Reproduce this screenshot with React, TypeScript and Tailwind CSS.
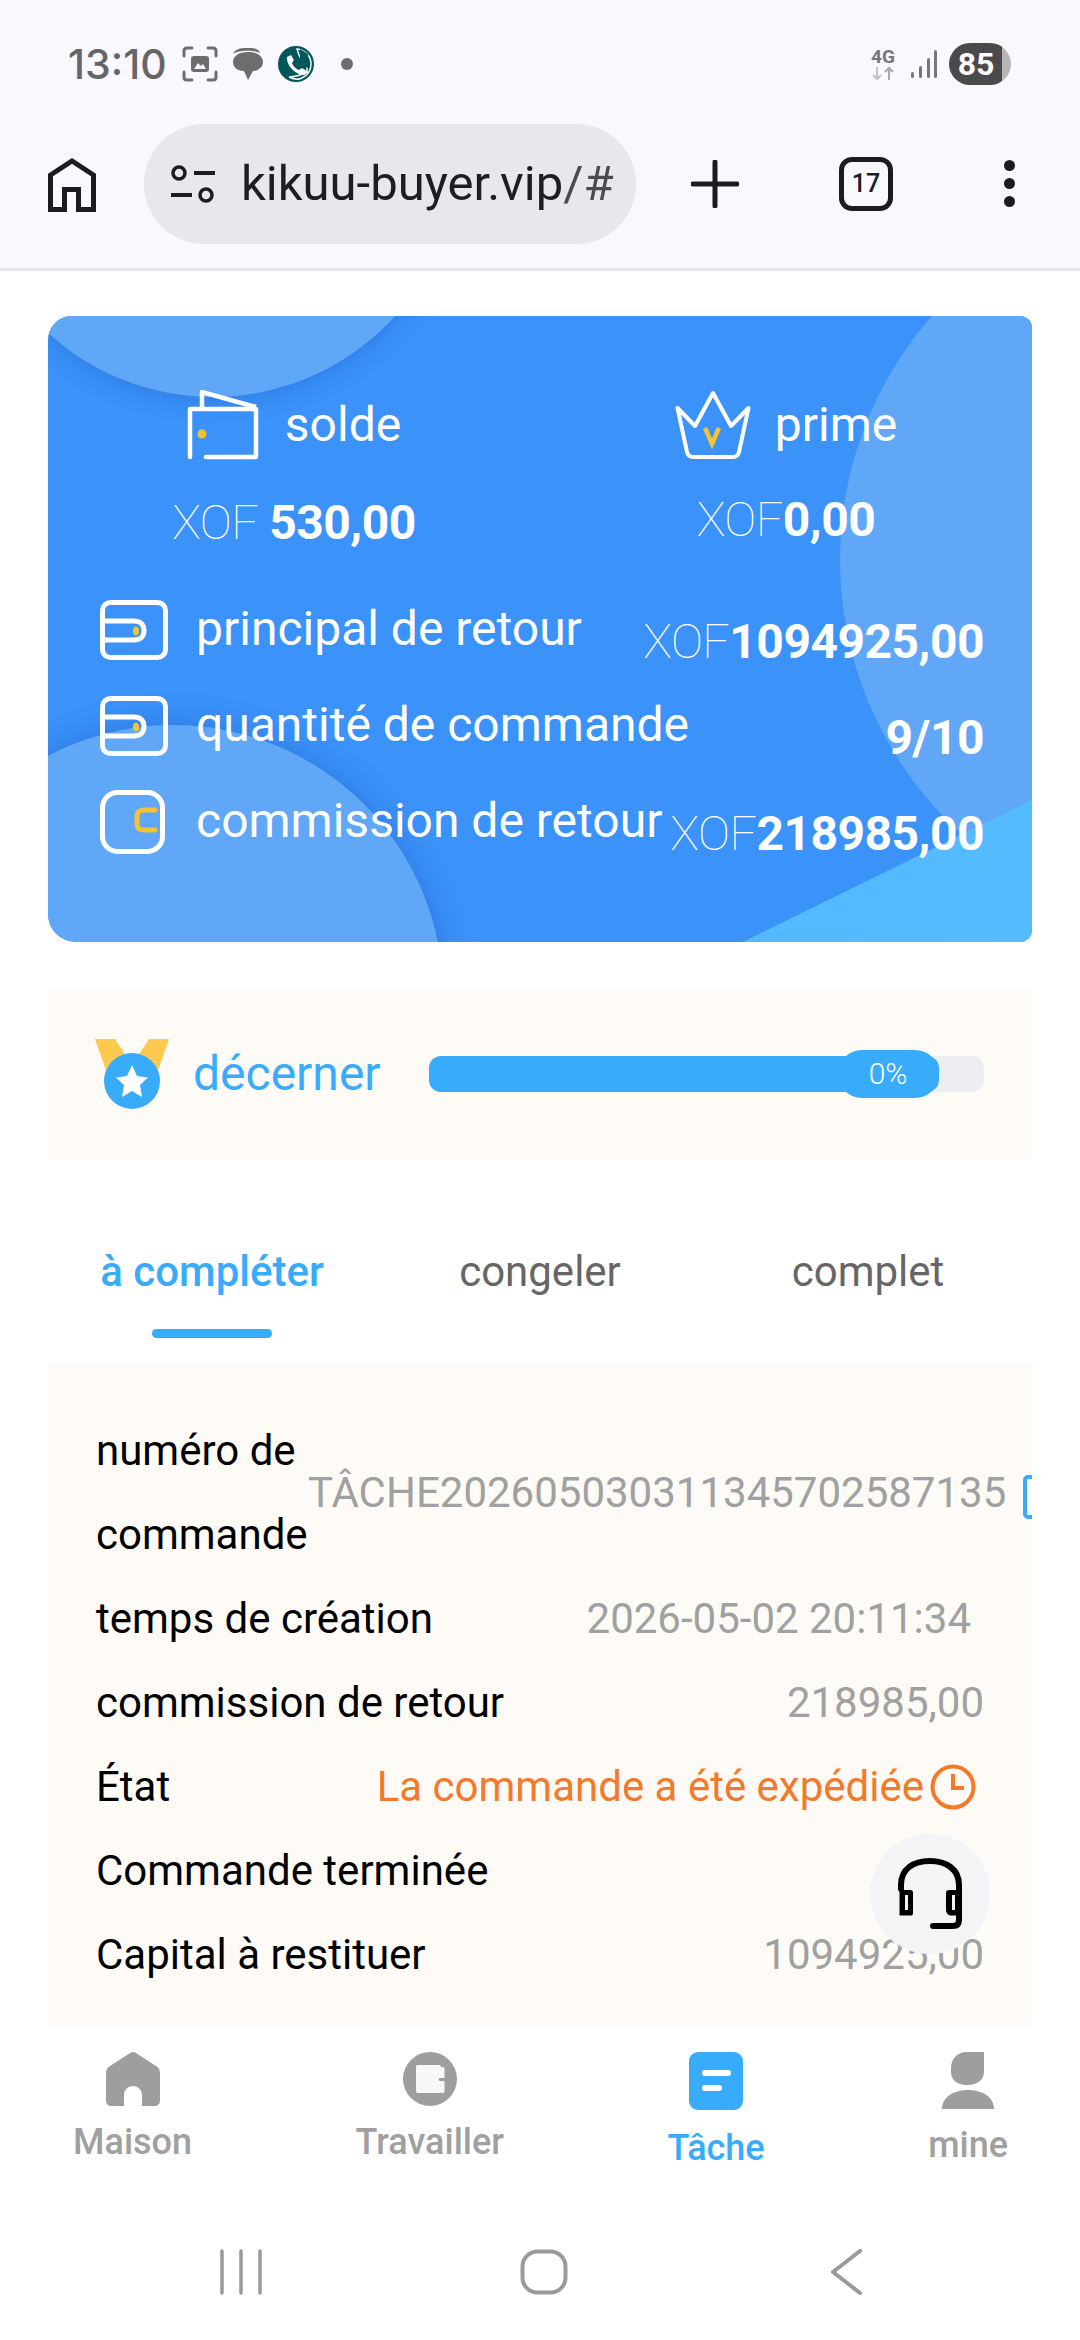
import React from "react";

const Y = "#f5c332";

function RowIcon({ kind }: { kind: "slot" | "c" }) {
  if (kind === "slot")
    return (
      <svg width="68" height="60" viewBox="0 0 68 60" fill="none" className="flex-none">
        <rect x="2.5" y="2.5" width="63" height="55" rx="8" stroke="#fff" strokeWidth="5" />
        <path d="M4 21H34C41 21 44 25 44 30.500C44 36 41 40 34 40H4" stroke="#fff" strokeWidth="5" />
        <ellipse cx="36" cy="31" rx="3" ry="4.500" fill={Y} />
      </svg>
    );
  return (
    <svg width="68" height="64" viewBox="0 0 68 64" fill="none" className="flex-none">
      <rect x="2.500" y="2.500" width="60" height="59" rx="15" stroke="#fff" strokeWidth="5" />
      <path d="M55 20H44C39 20 37 23 37 26V34C37 38 39 40 44 40H55" stroke={Y} strokeWidth="5" strokeLinecap="round" />
    </svg>
  );
}

function Money({ cur, val, className }: { cur: string; val: string; className?: string }) {
  return (
    <div className={"text-white whitespace-nowrap text-[48px] leading-[56px] font-bold tracking-[-0.5px] " + (className || "")}>
      <span className="font-thin">{cur}</span>
      {val}
    </div>
  );
}

function Row({ icon, label, right }: { icon: "slot" | "c"; label: string; right: React.ReactNode }) {
  return (
    <div className="flex items-center justify-between h-[96px] whitespace-nowrap">
      <div className="flex items-center gap-[28px]">
        <RowIcon kind={icon} />
        <span className="text-white text-[48px] leading-[56px] -mt-[2px]">{label}</span>
      </div>
      <div className="mt-[24px]">{right}</div>
    </div>
  );
}

function Detail({ label, children }: { label: string; children: React.ReactNode }) {
  return (
    <div className="flex justify-between items-center h-[84px] whitespace-nowrap">
      <span className="text-black">{label}</span>
      {children}
    </div>
  );
}

export default function App() {
  return (
    <div className="w-[1080px] h-[2340px] bg-white flex flex-col overflow-hidden relative font-['Roboto',sans-serif]">
      {/* browser chrome */}
      <div className="bg-[#f8f8fe] border-b-[3px] border-[#e4e4ea] h-[271px] flex-none">
        <div className="h-[124px] pt-[43px] pl-[68px] pr-[69px] flex justify-between items-start">
          <div className="flex items-center h-[42px]">
            <span className="text-[41px] leading-[42px] text-[#666669] font-medium font-['Inter',sans-serif] w-[114px] whitespace-nowrap">13:10</span>
            <svg width="36" height="36" viewBox="0 0 36 36" fill="none" className="flex-none">
              <path d="M2 10V5C2 3 3 2 5 2H10M26 2H31C33 2 34 3 34 5V10M34 26V31C34 33 33 34 31 34H26M10 34H5C3 34 2 33 2 31V26" stroke="#6d6d70" strokeWidth="3" strokeLinecap="round" />
              <rect x="9" y="10" width="18" height="16" rx="3" fill="#6d6d70" />
              <path d="M12 23L16 17L19 20L21 18L24 23Z" fill="#f8f8fe" />
            </svg>
            <svg width="32" height="34" viewBox="0 0 32 34" className="ml-[14px] flex-none">
              <path d="M1 7C3 2 8 1 14 1H18C24 1 27 3 28 6C23 3 6 3 1 7Z" fill="#6d6d70" />
              <path d="M16 5C25 5 31 9 31 15C31 21 25 24 21 24L16 33L12 24C5 24 1 20 1 15C1 9 7 5 16 5Z" fill="#6d6d70" />
            </svg>
            <svg width="36" height="36" viewBox="0 0 36 36" className="ml-[14px] flex-none">
              <circle cx="18" cy="18" r="18" fill="#00565b" />
              <path d="M19 3C27 4 33 10 33 18C33 24 30 29 24 32C20 34 15 33 11 31C17 31 21 30 29 26V13L22 11L21 9Z" fill="none" stroke="#f8f8fe" strokeWidth="1.500" />
              <path d="M9 11L13 9L16 14L14 17C15 20 18 23 21 24L24 22L29 25L27 29C19 30 8 20 9 11Z" fill="#f8f8fe" />
              <path d="M22 3L30 8V22L22 18Z" fill="#00565b" />
            </svg>
            <span className="w-[12px] h-[12px] rounded-full bg-[#6d6d70] ml-[27px] flex-none" />
          </div>
          <div className="flex items-center h-[42px]">
            <div className="w-[28px] flex flex-col items-center">
              <span className="text-[19px] leading-[18px] font-bold text-[#77777a]">4G</span>
              <svg width="26" height="15" viewBox="0 0 26 15" fill="none">
                <path d="M7 1V13M3 9L7 13L11 9" stroke="#c4c4c8" strokeWidth="2" />
                <path d="M19 14V2M15 6L19 2L23 6" stroke="#a9a9ad" strokeWidth="2" />
              </svg>
            </div>
            <svg width="28" height="30" viewBox="0 0 28 30" className="ml-[13px] flex-none">
              <rect x="1" y="23" width="3" height="6" rx="1.500" fill="#77777a" />
              <rect x="9" y="17" width="3" height="12" rx="1.500" fill="#77777a" />
              <rect x="17" y="9" width="3" height="20" rx="1.500" fill="#77777a" />
              <rect x="24" y="1" width="3" height="28" rx="1.500" fill="#77777a" />
            </svg>
            <div className="ml-[11px] w-[62px] h-[42px] rounded-[21px] bg-[linear-gradient(90deg,#4a4a4c_85%,#b7b7ba_85%)] flex items-center justify-center text-white font-bold text-[32px] pr-[8px]">85</div>
          </div>
        </div>
        <div className="flex items-start h-[120px] pl-[48px]">
          <svg width="48" height="54" viewBox="0 0 48 54" fill="none" className="flex-none mt-[34px]">
            <path d="M2.500 51.500V17L24 3L45.500 17V51.500H30.500V31.500H16.500V51.500Z" stroke="#1c1c20" strokeWidth="5" />
          </svg>
          <div className="ml-[48px] w-[492px] h-[120px] rounded-[60px] bg-[#e7e7ed] flex items-center pl-[26px] flex-none">
            <svg width="46" height="38" viewBox="0 0 46 38" fill="none" className="flex-none">
              <circle cx="9" cy="8" r="6" stroke="#1c1c20" strokeWidth="3.500" />
              <path d="M24 8H45M1 30H22" stroke="#1c1c20" strokeWidth="4" />
              <circle cx="36" cy="30" r="6" stroke="#1c1c20" strokeWidth="3.500" />
            </svg>
            <span className="ml-[25px] text-[49px] leading-[60px] text-[#1d1d22] whitespace-nowrap">
              kikuu-buyer.vip<span className="text-[#4a4a50]">/#</span>
            </span>
          </div>
          <svg width="48" height="48" viewBox="0 0 48 48" fill="none" className="ml-[55px] mt-[36px] flex-none">
            <path d="M24 2V46M2 24H46" stroke="#1c1c20" strokeWidth="5" strokeLinecap="round" />
          </svg>
          <div className="ml-[100px] mt-[33px] w-[54px] h-[54px] rounded-[13px] border-[5px] border-[#1c1c20] flex items-center justify-center text-[25px] font-medium text-[#1c1c20] flex-none">17</div>
          <div className="ml-[111px] mt-[36px] flex flex-col gap-[7px] flex-none">
            <span className="w-[11px] h-[11px] rounded-full bg-[#1c1c20]" />
            <span className="w-[11px] h-[11px] rounded-full bg-[#1c1c20]" />
            <span className="w-[11px] h-[11px] rounded-full bg-[#1c1c20]" />
          </div>
        </div>
      </div>

      {/* page */}
      <div className="px-[48px] pt-[45px] flex-none">
        {/* balance card */}
        <div className="relative h-[626px] rounded-tl-[24px] rounded-bl-[28px] rounded-r-[12px] overflow-hidden bg-[#3b92f8]">
          <div className="absolute w-[490px] h-[490px] rounded-full bg-[#60a7f8] left-[-80px] top-[-409px] shadow-[0_0_24px_rgba(25,85,190,0.45)]" />
          <div className="absolute w-[740px] h-[740px] rounded-full bg-[#60a7f8] left-[792px] top-[-126px]" />
          <div className="absolute w-[540px] h-[540px] rounded-full bg-[#60a7f8] left-[-145px] top-[409px] shadow-[0_0_30px_rgba(25,85,190,0.45)]" />
          <div className="absolute inset-0 bg-[linear-gradient(135deg,#48aefc,#55bcff)] [clip-path:polygon(100%_77.300%,100%_100%,70.600%_100%)]" />
          <div className="relative">
            <div className="grid grid-cols-2 pt-[74px]">
              <div className="flex flex-col items-center">
                <div className="flex items-center h-[70px]">
                  <svg width="72" height="70" viewBox="0 0 72 70" fill="none" className="flex-none">
                    <path d="M3 67V19H69V67H19" stroke="#fff" strokeWidth="4.500" strokeLinecap="round" strokeLinejoin="round" />
                    <path d="M15 19V2L69 17" stroke="#fff" strokeWidth="4.500" strokeLinejoin="round" />
                    <circle cx="15" cy="44" r="4.500" fill={Y} />
                  </svg>
                  <span className="ml-[26px] text-white text-[48px] leading-[56px]">solde</span>
                </div>
                <Money cur="XOF " val="530,00" className="mt-[35px]" />
              </div>
              <div className="flex flex-col items-center">
                <div className="flex items-center h-[70px]">
                  <svg width="76" height="70" viewBox="0 0 76 70" fill="none" className="flex-none">
                    <path d="M2.500 18L20 36L38 3L56 36L73.500 18L64 62C63 66 61 67 58 67H18C15 67 13 66 12 62Z" stroke="#fff" strokeWidth="4" strokeLinejoin="round" />
                    <path d="M30 38L37 54L44 38" stroke={Y} strokeWidth="4.500" />
                  </svg>
                  <span className="ml-[24px] text-white text-[48px] leading-[56px]">prime</span>
                </div>
                <Money cur="XOF" val="0,00" className="mt-[32px]" />
              </div>
            </div>
            <div className="pl-[52px] pr-[48px] mt-[31px]">
              <Row icon="slot" label="principal de retour" right={<Money cur="XOF" val="1094925,00" />} />
              <Row icon="slot" label="quantité de commande" right={<Money cur="" val="9/10" />} />
              <Row icon="c" label="commission de retour" right={<Money cur="XOF" val="218985,00" />} />
            </div>
          </div>
        </div>

        {/* award */}
        <div className="mt-[48px] h-[168px] bg-[#fefbf7] flex items-center pl-[47px] pr-[48px]">
          <svg width="74" height="70" viewBox="0 0 74 70" className="flex-none">
            <path d="M0 0H20L33 20L14 40Z M74 0H54L41 20L60 40Z" fill="#fdc94f" />
            <circle cx="37" cy="42" r="28" fill="#38abfb" />
            <path d="M37 26L42 37L53 38.500L45 46L47 58L37 52L27 58L29 46L21 38.500L32 37Z" fill="#fff" />
          </svg>
          <span className="ml-[24px] text-[48px] leading-[56px] text-[#38abfb] whitespace-nowrap">décerner</span>
          <div className="ml-[48px] relative h-[36px] flex-1 rounded-[12px] bg-[#eceef2]">
            <div className="h-full w-[510px] rounded-[12px] bg-[#38abfb]" />
            <div className="absolute left-[409px] top-[-6px] w-[101px] h-[48px] rounded-[24px] bg-[#38abfb] text-white text-[30px] font-light leading-[48px] text-center">0%</div>
          </div>
        </div>

        {/* tabs */}
        <div className="h-[205px] pt-[84px]">
          <div className="grid grid-cols-3 text-[42px] leading-[60px] text-center text-[#666666]">
            <div className="text-[#38abfb] font-medium">à compléter</div>
            <div>congeler</div>
            <div>complet</div>
          </div>
          <div className="ml-[104px] mt-[27px] w-[120px] h-[9px] rounded-[5px] bg-[#38abfb]" />
        </div>

        {/* detail */}
        <div className="h-[664px] bg-[#fefbf7] overflow-hidden pl-[48px] pr-[48px] pt-[46px] text-[42px] leading-[84px] text-[#a0a0a0]">
          <div className="flex items-center">
            <div className="w-[212px] flex-none text-black">numéro de commande</div>
            <span className="whitespace-nowrap flex-none">TÂCHE202605030311345702587135</span>
            <span className="ml-[17px] w-[24px] h-[44px] flex-none rounded-[5px] border-[4px] border-[#38abfb] mt-[8px]" />
          </div>
          <Detail label="temps de création"><span className="pr-[13px]">2026-05-02 20:11:34</span></Detail>
          <Detail label="commission de retour"><span>218985,00</span></Detail>
          <Detail label="État">
            <span className="flex items-center text-[#f37a2a] mr-[8px]">
              La commande a été expédiée
              <svg width="46" height="46" viewBox="0 0 46 46" fill="none" className="ml-[6px] flex-none">
                <circle cx="23" cy="23" r="20.500" stroke="#f37a2a" strokeWidth="4" />
                <path d="M23 10V24H34" stroke="#f37a2a" strokeWidth="4" />
              </svg>
            </span>
          </Detail>
          <Detail label="Commande terminée"><span className="pr-[5px]">9/10</span></Detail>
          <Detail label="Capital à restituer"><span>1094925,00</span></Detail>
        </div>
      </div>

      {/* floating help */}
      <div className="absolute left-[870px] top-[1834px] w-[120px] h-[120px] rounded-full bg-[#f3f4f6] flex items-center justify-center">
        <svg width="66" height="72" viewBox="0 0 66 72" fill="none">
          <path d="M4 31V27C4 11 16 3 33 3C49 3 62 11 62 27V62C62 66 60 68 56 68H36" stroke="#000" strokeWidth="6" strokeLinecap="round" />
          <path d="M2.500 32H13C15.500 32 16 33 16 35V55C16 57 15 57.500 13 57.500H2.500Z" fill="#000" />
          <rect x="8" y="37" width="3" height="15" fill="#f3f4f6" />
          <path d="M61 32H52C50 32 49 33 49 35V52C49 55 51 57.500 54 57.500H61Z" fill="#000" />
          <rect x="55" y="37" width="3" height="15" fill="#f3f4f6" />
        </svg>
      </div>

      {/* bottom nav */}
      <div className="flex justify-between items-start pl-[73px] pr-[72px] pt-[25px] h-[184px] flex-none text-[36px] font-medium text-[#a0a0a0] whitespace-nowrap text-center">
        <div className="flex flex-col items-center">
          <svg width="54" height="54" viewBox="0 0 54 54"><path d="M24.500 0.800C26 -0.200 28 -0.200 29.500 0.800L50 14C52.500 15.500 54 18 54 21V48C54 52 52 54 48 54H36V43C36 38 32 34 27 34C22 34 18 38 18 43V54H6C2 54 0 52 0 48V21C0 18 1.500 15.500 4 14Z" fill="#9e9e9e" /></svg>
          <span className="mt-[16px] leading-[40px]">Maison</span>
        </div>
        <div className="flex flex-col items-center">
          <svg width="54" height="54" viewBox="0 0 54 54"><circle cx="27" cy="27" r="27" fill="#9e9e9e" /><path d="M14.500 13H36C37 13 38 14 38 15H40C41.500 15 41.500 16 41.500 17V26H37C35 26 35 29 37 29H41.500V39C41.500 40.500 41 41 39.500 41H15C14 41 13 40 13 39V15C13 14 13.500 13 14.500 13Z" fill="#f7f7f7" /></svg>
          <span className="mt-[16px] leading-[40px]">Travailler</span>
        </div>
        <div className="flex flex-col items-center text-[#38abfb]">
          <svg width="54" height="58" viewBox="0 0 54 58"><rect width="54" height="58" rx="9" fill="#38abfb" /><rect x="13" y="18" width="29" height="6" rx="3" fill="#fff" /><rect x="13" y="33" width="20" height="6" rx="3" fill="#fff" /></svg>
          <span className="mt-[18px] leading-[40px]">Tâche</span>
        </div>
        <div className="flex flex-col items-center">
          <svg width="52" height="57" viewBox="0 0 52 57"><path d="M25 0H42V20C42 27 36 33 25 33C14 33 9 27 9 20V16C9 7 15 0 25 0Z" fill="#9e9e9e" /><path d="M0 57C0 45 12 38 26 38C40 38 52 45 52 57Z" fill="#9e9e9e" /></svg>
          <span className="mt-[16px] leading-[40px]">mine</span>
        </div>
      </div>

      {/* system nav */}
      <div className="flex-1 flex items-start pt-[38px] pl-[220px]">
        <svg width="42" height="46" viewBox="0 0 42 46" fill="none" className="flex-none">
          <path d="M2 2V44M21 2V44M40 2V44" stroke="#9a9a9a" strokeWidth="3.500" strokeLinecap="round" />
        </svg>
        <svg width="48" height="46" viewBox="0 0 48 46" fill="none" className="flex-none ml-[258px]">
          <rect x="2.500" y="2.500" width="43" height="41" rx="15" stroke="#9a9a9a" strokeWidth="4" />
        </svg>
        <svg width="32" height="46" viewBox="0 0 32 46" fill="none" className="flex-none ml-[262px]">
          <path d="M30 2L3 23L30 44" stroke="#9a9a9a" strokeWidth="4" strokeLinecap="round" strokeLinejoin="round" />
        </svg>
      </div>
    </div>
  );
}
